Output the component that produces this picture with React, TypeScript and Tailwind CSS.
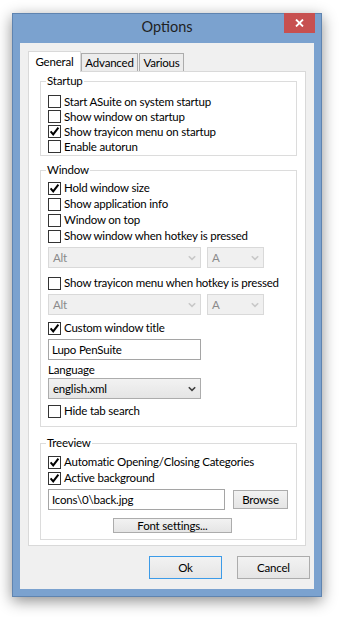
import React from "react";

function Check({ checked }: { checked?: boolean }) {
  return (
    <span className="w-[13px] h-[13px] border border-[#333333] bg-white flex items-center justify-center shrink-0">
      {checked && (
        <svg width="11" height="11" viewBox="0 0 11 11">
          <path d="M1.6 5.4 L4.2 8.4 L9.4 1.6" stroke="#000" strokeWidth="2" fill="none" />
        </svg>
      )}
    </span>
  );
}

function Chevron({ color }: { color: string }) {
  return (
    <svg width="8" height="6" viewBox="0 0 8 6">
      <path d="M0.8 1.2 L4 4.4 L7.2 1.2" stroke={color} strokeWidth="1.6" fill="none" />
    </svg>
  );
}

function Row({ checked, label }: { checked?: boolean; label: string }) {
  return (
    <div className="flex items-center h-[16px]">
      <Check checked={checked} />
      <span className="ml-[3px] leading-[16px] whitespace-nowrap">{label}</span>
    </div>
  );
}

function Row15({ checked, label }: { checked?: boolean; label: string }) {
  return (
    <div className="flex items-center h-[15px]">
      <Check checked={checked} />
      <span className="ml-[3px] leading-[15px] whitespace-nowrap">{label}</span>
    </div>
  );
}

function DisabledCombos() {
  return (
    <div className="flex gap-[6px]">
      <div className="w-[153px] h-[21px] border border-[#d9d9d9] bg-[#f0f0f0] flex items-center justify-between pl-[4px] pr-[4px] text-[#8a8a8a]">
        <span>Alt</span>
        <Chevron color="#c8c8c8" />
      </div>
      <div className="w-[57px] h-[21px] border border-[#d9d9d9] bg-[#f0f0f0] flex items-center justify-between pl-[4px] pr-[4px] text-[#8a8a8a]">
        <span>A</span>
        <Chevron color="#c8c8c8" />
      </div>
    </div>
  );
}

export default function App() {
  return (
    <div className="w-[342px] h-[617px] bg-white pt-[13px] pl-[12px] font-['Lato','Noto_Sans',sans-serif] text-[11.5px] tracking-[-0.2px] text-black">
      <div className="w-[310px] h-[584px] border border-[#5f84b0] bg-[#7ba2cf] flex flex-col shadow-[0_4px_14px_rgba(0,0,0,0.45)]">
        {/* Title bar */}
        <div className="h-[29px] relative flex items-start justify-center shrink-0">
          <span className="text-[14.5px] tracking-normal text-[#1f1f1f] leading-[20px] mt-[3px]">Options</span>
          <div className="absolute top-[-1px] right-[6px] w-[31px] h-[20px] bg-[#c75050] flex items-center justify-center">
            <svg width="9" height="8" viewBox="0 0 9 8">
              <path d="M1 0.5 L8 7.5 M8 0.5 L1 7.5" stroke="#fff" strokeWidth="1.8" fill="none" />
            </svg>
          </div>
        </div>

        {/* Client area */}
        <div className="mx-[7px] h-[546px] bg-[#f0f0f0] flex flex-col pt-[8px] pl-[8px]">
          {/* Tabs */}
          <div className="h-[20px] flex items-end">
            <div className="w-[53px] h-[21px] -mb-[1px] relative z-10 border border-b-0 border-[#d9d9d9] bg-white flex items-center justify-center leading-[16px]">
              General
            </div>
            <div className="w-[57px] h-[18px] border border-b-0 border-[#acacac] bg-[#ececec] flex items-center justify-center leading-[16px]">
              Advanced
            </div>
            <div className="ml-[1px] w-[45px] h-[18px] border border-b-0 border-[#acacac] bg-[#ececec] flex items-center justify-center leading-[16px]">
              Various
            </div>
          </div>

          {/* Tab page */}
          <div className="w-[278px] h-[475px] border border-[#d9d9d9] bg-white flex flex-col pl-[11px]">
            {/* Startup */}
            <div className="mt-[9px] w-[257px] h-[75px] border border-[#dcdcdc] relative pl-[7px] pt-[12px] flex flex-col">
              <span className="absolute -top-[9px] left-[5px] bg-white px-[1px] leading-[16px]">Startup</span>
              <Row15 label="Start ASuite on system startup" />
              <Row15 label="Show window on startup" />
              <Row15 checked label="Show trayicon menu on startup" />
              <Row15 label="Enable autorun" />
            </div>

            {/* Window */}
            <div className="mt-[14px] w-[257px] h-[257px] border border-[#dcdcdc] relative pl-[7px] pt-[9px] flex flex-col">
              <span className="absolute -top-[9px] left-[5px] bg-white px-[1px] leading-[16px]">Window</span>
              <Row checked label="Hold window size" />
              <Row label="Show application info" />
              <Row label="Window on top" />
              <Row label="Show window when hotkey is pressed" />
              <div className="mt-[3px]">
                <DisabledCombos />
              </div>
              <div className="mt-[7px]">
                <Row label="Show trayicon menu when hotkey is pressed" />
              </div>
              <div className="mt-[3px]">
                <DisabledCombos />
              </div>
              <div className="mt-[5px]">
                <Row checked label="Custom window title" />
              </div>
              <div className="mt-[3px] w-[153px] h-[21px] border border-[#a5a5a5] bg-white flex items-center pl-[3px]">
                Lupo PenSuite
              </div>
              <div className="mt-[2px] h-[16px] leading-[16px]">Language</div>
              <div className="w-[153px] h-[21px] border border-[#acacac] bg-gradient-to-b from-[#f2f2f2] to-[#e5e5e5] flex items-center justify-between pl-[4px] pr-[4px]">
                <span>english.xml</span>
                <Chevron color="#404040" />
              </div>
              <div className="mt-[4px]">
                <Row label="Hide tab search" />
              </div>
            </div>

            {/* Treeview */}
            <div className="mt-[16px] w-[257px] h-[97px] border border-[#dcdcdc] relative pl-[7px] pt-[10px] flex flex-col">
              <span className="absolute -top-[9px] left-[5px] bg-white px-[1px] leading-[16px]">Treeview</span>
              <Row checked label="Automatic Opening/Closing Categories" />
              <Row checked label="Active background" />
              <div className="mt-[3px] flex items-center">
                <div className="w-[177px] h-[21px] border border-[#a5a5a5] bg-white flex items-center pl-[3px]">
                  Icons\0\back.jpg
                </div>
                <div className="ml-[8px] w-[55px] h-[19px] border border-[#acacac] bg-gradient-to-b from-[#f2f2f2] to-[#e5e5e5] flex items-center justify-center leading-[15px]">
                  Browse
                </div>
              </div>
              <div className="mt-[8px] ml-[65px] w-[119px] h-[15px] border border-[#acacac] bg-gradient-to-b from-[#f2f2f2] to-[#e5e5e5] flex items-center justify-center leading-[13px]">
                Font settings...
              </div>
            </div>
          </div>

          {/* Buttons */}
          <div className="mt-[10px] flex justify-end gap-[15px] pr-[4px]">
            <div className="w-[73px] h-[23px] border border-[#3c9be8] bg-gradient-to-b from-[#f2f2f2] to-[#e5e5e5] flex items-center justify-center">
              Ok
            </div>
            <div className="w-[73px] h-[23px] border border-[#acacac] bg-gradient-to-b from-[#f2f2f2] to-[#e5e5e5] flex items-center justify-center">
              Cancel
            </div>
          </div>
        </div>
      </div>
    </div>
  );
}
